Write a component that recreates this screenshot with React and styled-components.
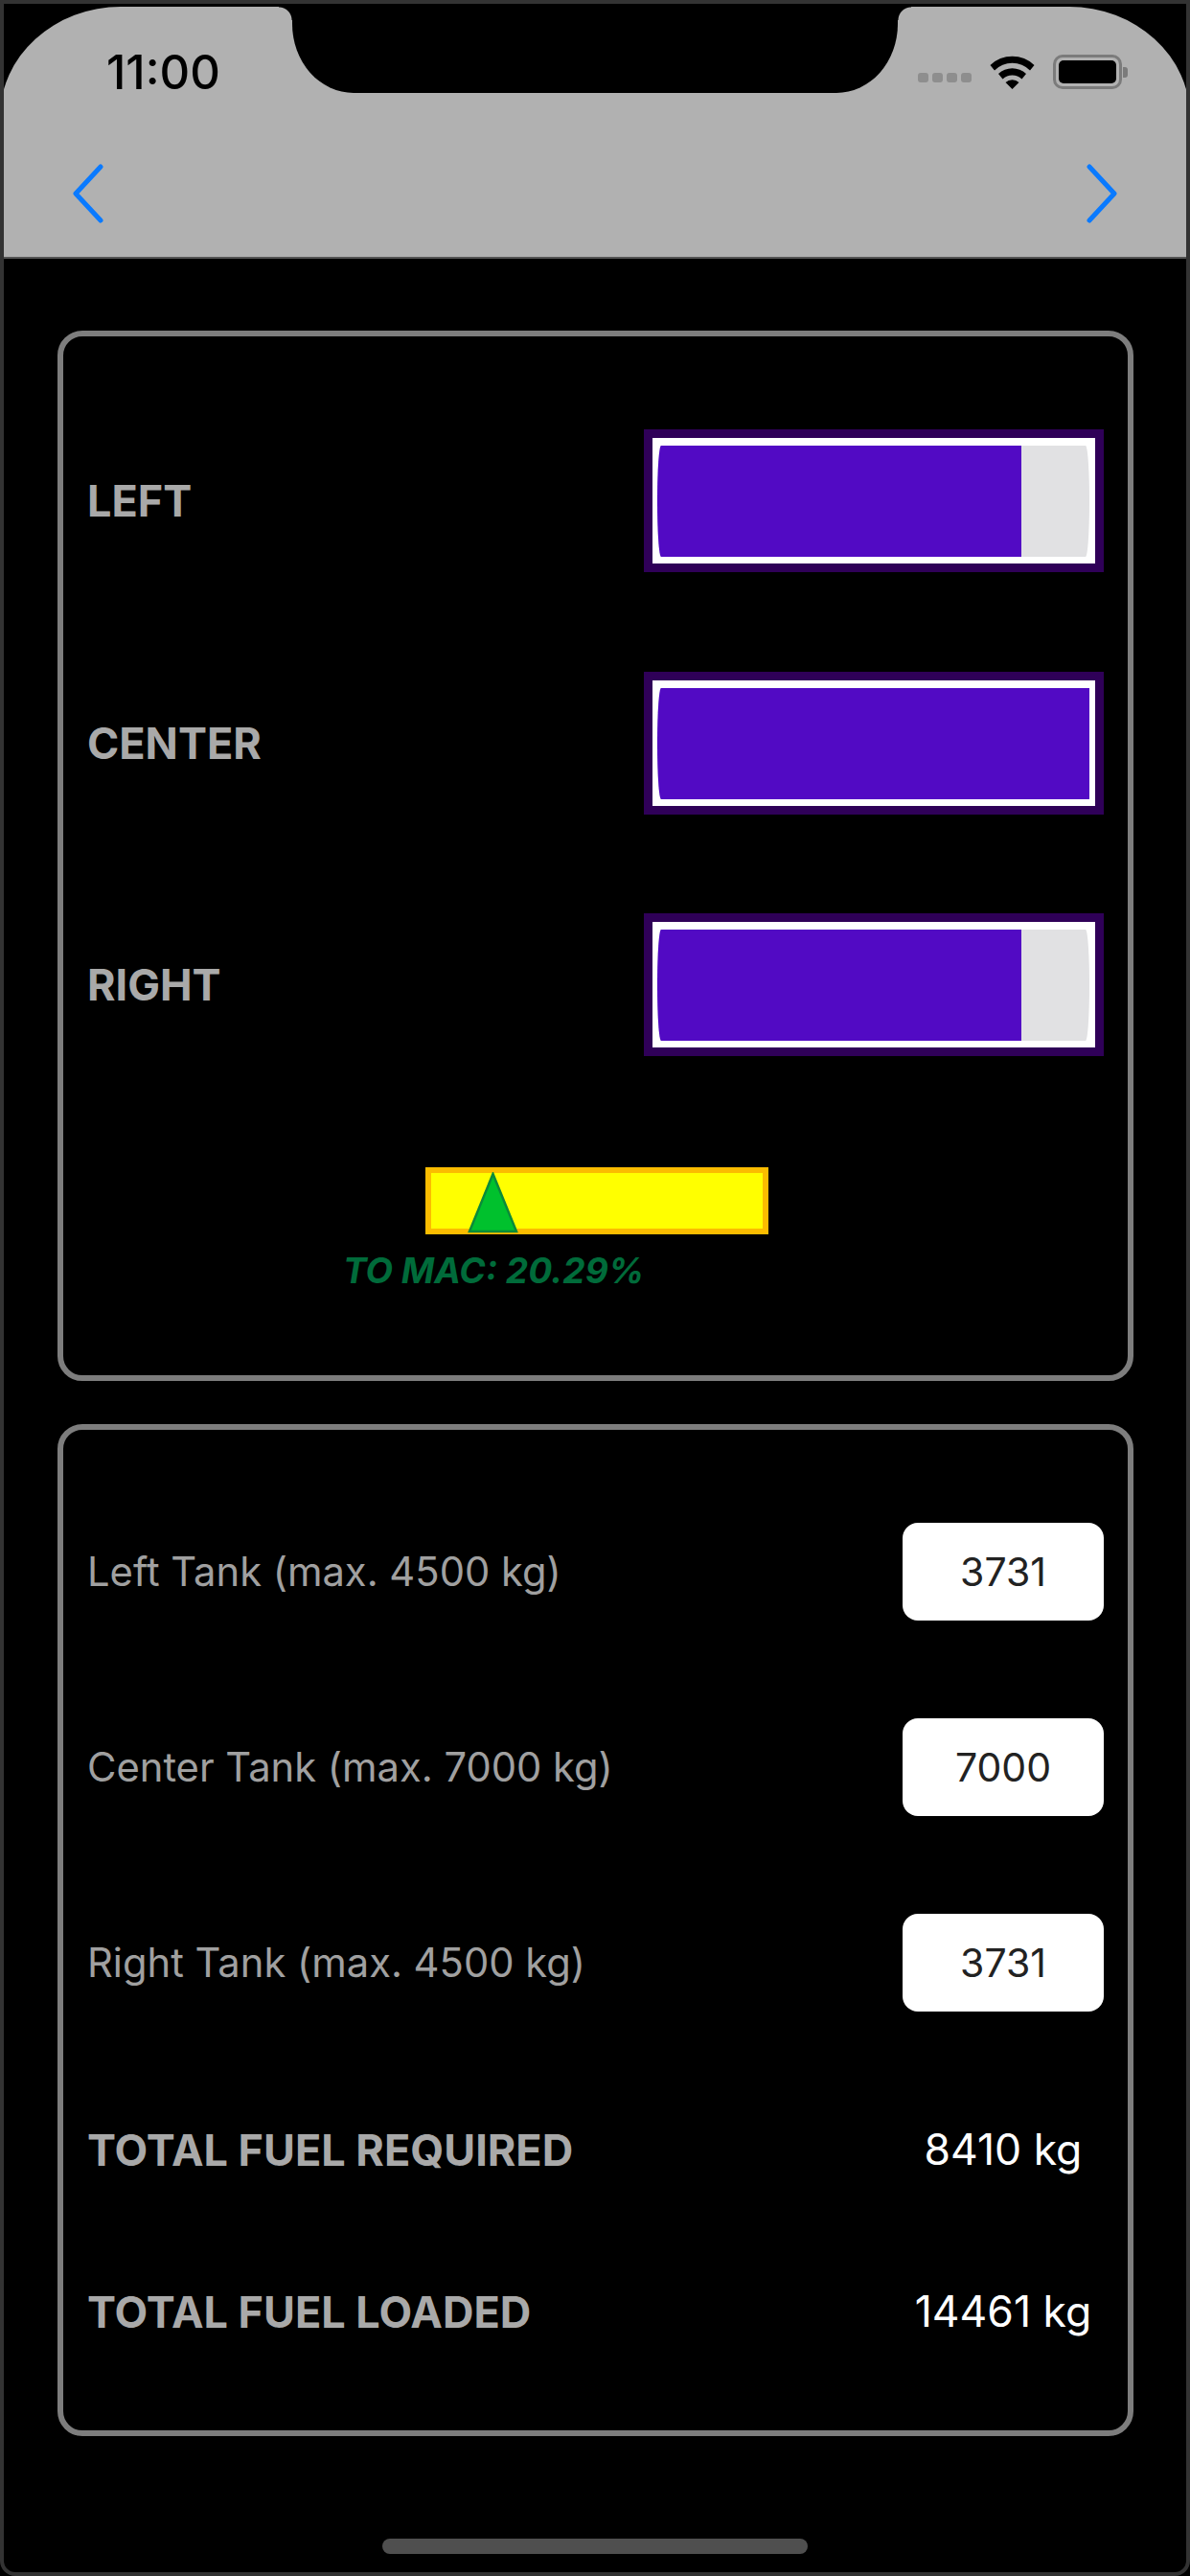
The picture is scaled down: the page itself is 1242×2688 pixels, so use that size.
import { createGlobalStyle, styled } from "styled-components";

const GlobalStyle = createGlobalStyle`
  html, body {
    margin: 0;
    padding: 0;
    background: #000;
  }
  * {
    box-sizing: border-box;
  }
`;

const font = `Inter, "Liberation Sans", sans-serif`;

const tanks = [
  { name: "LEFT", fill: 84.3 },
  { name: "CENTER", fill: 100 },
  { name: "RIGHT", fill: 84.3 },
];

const inputs = [
  { label: "Left Tank (max. 4500 kg)", value: "3731" },
  { label: "Center Tank (max. 7000 kg)", value: "7000" },
  { label: "Right Tank (max. 4500 kg)", value: "3731" },
];

const totals = [
  { label: "TOTAL FUEL REQUIRED", value: "8410 kg" },
  { label: "TOTAL FUEL LOADED", value: "14461 kg" },
];

function Wifi() {
  return (
    <svg width="47" height="36" viewBox="0 0 47 36">
      <path d="M0.5 11 A33 33 0 0 1 46.5 11 L42 16.5 A26 26 0 0 0 5 16.5 Z" fill="#000" />
      <path d="M9 20 A21 21 0 0 1 38 20 L33.5 25.5 A14.5 14.5 0 0 0 13.5 25.5 Z" fill="#000" />
      <path d="M23.5 36 L16.5 29 A10 10 0 0 1 30.5 29 Z" fill="#000" />
    </svg>
  );
}

function App() {
  return (
    <>
      <GlobalStyle />
      <Screen>
        <Header>
          <Notch />
          <StatusBar>
            <Time>11:00</Time>
            <StatusIcons>
              <Signal>
                <i /><i /><i /><i />
              </Signal>
              <Wifi />
              <Battery>
                <BatteryFill />
              </Battery>
            </StatusIcons>
          </StatusBar>
          <NavBar>
            <svg width="34" height="62" viewBox="0 0 34 62">
              <path d="M30 3 L4 31 L30 59" fill="none" stroke="#0a7aff" strokeWidth="5" strokeLinecap="round" strokeLinejoin="round" />
            </svg>
            <svg width="34" height="62" viewBox="0 0 34 62">
              <path d="M4 3 L30 31 L4 59" fill="none" stroke="#0a7aff" strokeWidth="5" strokeLinecap="round" strokeLinejoin="round" />
            </svg>
          </NavBar>
        </Header>
        <Content>
          <GaugeCard>
            {tanks.map((tank) => (
              <TankRow key={tank.name}>
                <BoldLabel>{tank.name}</BoldLabel>
                <TankBar>
                  <TankTrack>
                    <TankFill style={{ width: `${tank.fill}%` }} />
                  </TankTrack>
                </TankBar>
              </TankRow>
            ))}
            <TrimBlock>
              <TrimBar>
                <svg width="56" height="64" viewBox="0 0 56 64">
                  <path d="M27.5 2 L52 62 L3 62 Z" fill="#00c12d" stroke="#0a8a3a" strokeWidth="2.5" />
                </svg>
              </TrimBar>
              <TrimText>TO MAC: 20.29%</TrimText>
            </TrimBlock>
          </GaugeCard>
          <FuelCard>
            {inputs.map((row) => (
              <InputRow key={row.label}>
                <RowLabel>{row.label}</RowLabel>
                <ValueBox>{row.value}</ValueBox>
              </InputRow>
            ))}
            <Totals>
              {totals.map((row) => (
                <TotalRow key={row.label}>
                  <BoldLabel>{row.label}</BoldLabel>
                  <TotalValue>{row.value}</TotalValue>
                </TotalRow>
              ))}
            </Totals>
          </FuelCard>
        </Content>
        <HomeIndicator />
      </Screen>
    </>
  );
}

export default App;

const Screen = styled.div`
  position: relative;
  width: 1242px;
  height: 2688px;
  background: #000;
  border: 4px solid #333;
  border-radius: 0 0 16px 16px;
  overflow: hidden;
  font-family: ${font};
`;

const Header = styled.header`
  position: relative;
  height: 263px;
  margin: 3px -4px 75px;
  padding-top: 43px;
  background: #b1b1b1;
  border-radius: 126px 126px 0 0 / 115px 115px 0 0;
  border-bottom: 2px solid #555;
`;

const Notch = styled.div`
  position: absolute;
  top: 0;
  left: 305px;
  width: 632px;
  height: 90px;
  background: #000;
  border-radius: 0 0 64px 64px / 0 0 72px 72px;
  &::before,
  &::after {
    content: "";
    position: absolute;
    top: 0;
    width: 14px;
    height: 14px;
    background: radial-gradient(circle at 0 100%, transparent 13px, #000 14px);
  }
  &::before {
    left: -14px;
  }
  &::after {
    right: -14px;
    transform: scaleX(-1);
  }
`;

const StatusBar = styled.div`
  display: flex;
  justify-content: space-between;
  align-items: center;
  padding: 0 71px 0 111px;
  height: 50px;
`;

const Time = styled.span`
  font-size: 49px;
  font-weight: 500;
  color: #000;
`;

const StatusIcons = styled.div`
  display: flex;
  align-items: center;
  gap: 19px;
`;

const Signal = styled.div`
  display: flex;
  gap: 4px;
  align-self: flex-end;
  margin-bottom: 7px;
  i {
    width: 11px;
    height: 10px;
    border-radius: 3px;
    background: #8e8e8e;
  }
`;

const Battery = styled.div`
  position: relative;
  width: 72px;
  height: 36px;
  border: 3px solid #7b7b7b;
  border-radius: 10px;
  padding: 3px;
  &::after {
    content: "";
    position: absolute;
    right: -9px;
    top: 10px;
    width: 5px;
    height: 11px;
    border-radius: 0 3px 3px 0;
    background: #7b7b7b;
  }
`;

const BatteryFill = styled.div`
  height: 100%;
  background: #000;
  border-radius: 5px;
`;

const NavBar = styled.nav`
  display: flex;
  justify-content: space-between;
  padding: 71px 75px 0;
`;

const Content = styled.main`
  display: flex;
  flex-direction: column;
  gap: 45px;
  padding: 0 55px 0 56px;
`;

const Card = styled.section`
  display: flex;
  flex-direction: column;
  padding: 97px 25px 0;
  border: 6px solid #7d7d7d;
  border-radius: 26px;
`;

const GaugeCard = styled(Card)`
  height: 1096px;
  gap: 103.5px;
`;

const FuelCard = styled(Card)`
  height: 1056px;
`;

const TankRow = styled.div`
  display: flex;
  justify-content: space-between;
  align-items: center;
`;

const BoldLabel = styled.span`
  font-size: 45px;
  font-weight: 700;
  color: #a9a9a9;
`;

const TankBar = styled.div`
  width: 480px;
  height: 149px;
  padding: 8px 6px 7px 5px;
  background: #fff;
  border: 9px solid #2f0058;
`;

const TankTrack = styled.div`
  height: 100%;
  background: #e1e1e3;
  border-radius: 4px / 50%;
`;

const TankFill = styled.div`
  height: 100%;
  background: #520ac4;
  border-radius: 4px 0 0 4px / 50% 0 0 50%;
`;

const TrimBlock = styled.div`
  display: flex;
  flex-direction: column;
  margin-top: 12px;
  padding-left: 353px;
`;

const TrimBar = styled.div`
  position: relative;
  width: 358px;
  height: 70px;
  background: #ffff00;
  border: 6px solid #fbbc00;
  svg {
    position: absolute;
    left: 37px;
    bottom: -5px;
  }
`;

const TrimText = styled.span`
  margin: 15px 0 0 -86px;
  font-size: 37px;
  font-weight: 700;
  font-style: italic;
  color: #006b3a;
  white-space: nowrap;
`;

const InputRow = styled.div`
  display: flex;
  justify-content: space-between;
  align-items: center;
  height: 102px;
  margin-bottom: 102px;
`;

const RowLabel = styled.span`
  font-size: 41.7px;
  color: #a0a0a0;
`;

const ValueBox = styled.div`
  width: 210px;
  height: 102px;
  display: flex;
  align-items: center;
  justify-content: center;
  background: #fff;
  border-radius: 16px;
  color: #222;
  font-size: 41px;
`;

const Totals = styled.div`
  display: flex;
  flex-direction: column;
  gap: 109px;
  margin-top: 12px;
`;

const TotalRow = styled.div`
  display: flex;
  justify-content: space-between;
  align-items: center;
  height: 60px;
`;

const TotalValue = styled.span`
  width: 210px;
  text-align: center;
  font-size: 44.5px;
  color: #fff;
`;

const HomeIndicator = styled.div`
  position: absolute;
  left: 395px;
  top: 2645px;
  width: 444px;
  height: 16px;
  border-radius: 8px;
  background: #4f4f4f;
`;
